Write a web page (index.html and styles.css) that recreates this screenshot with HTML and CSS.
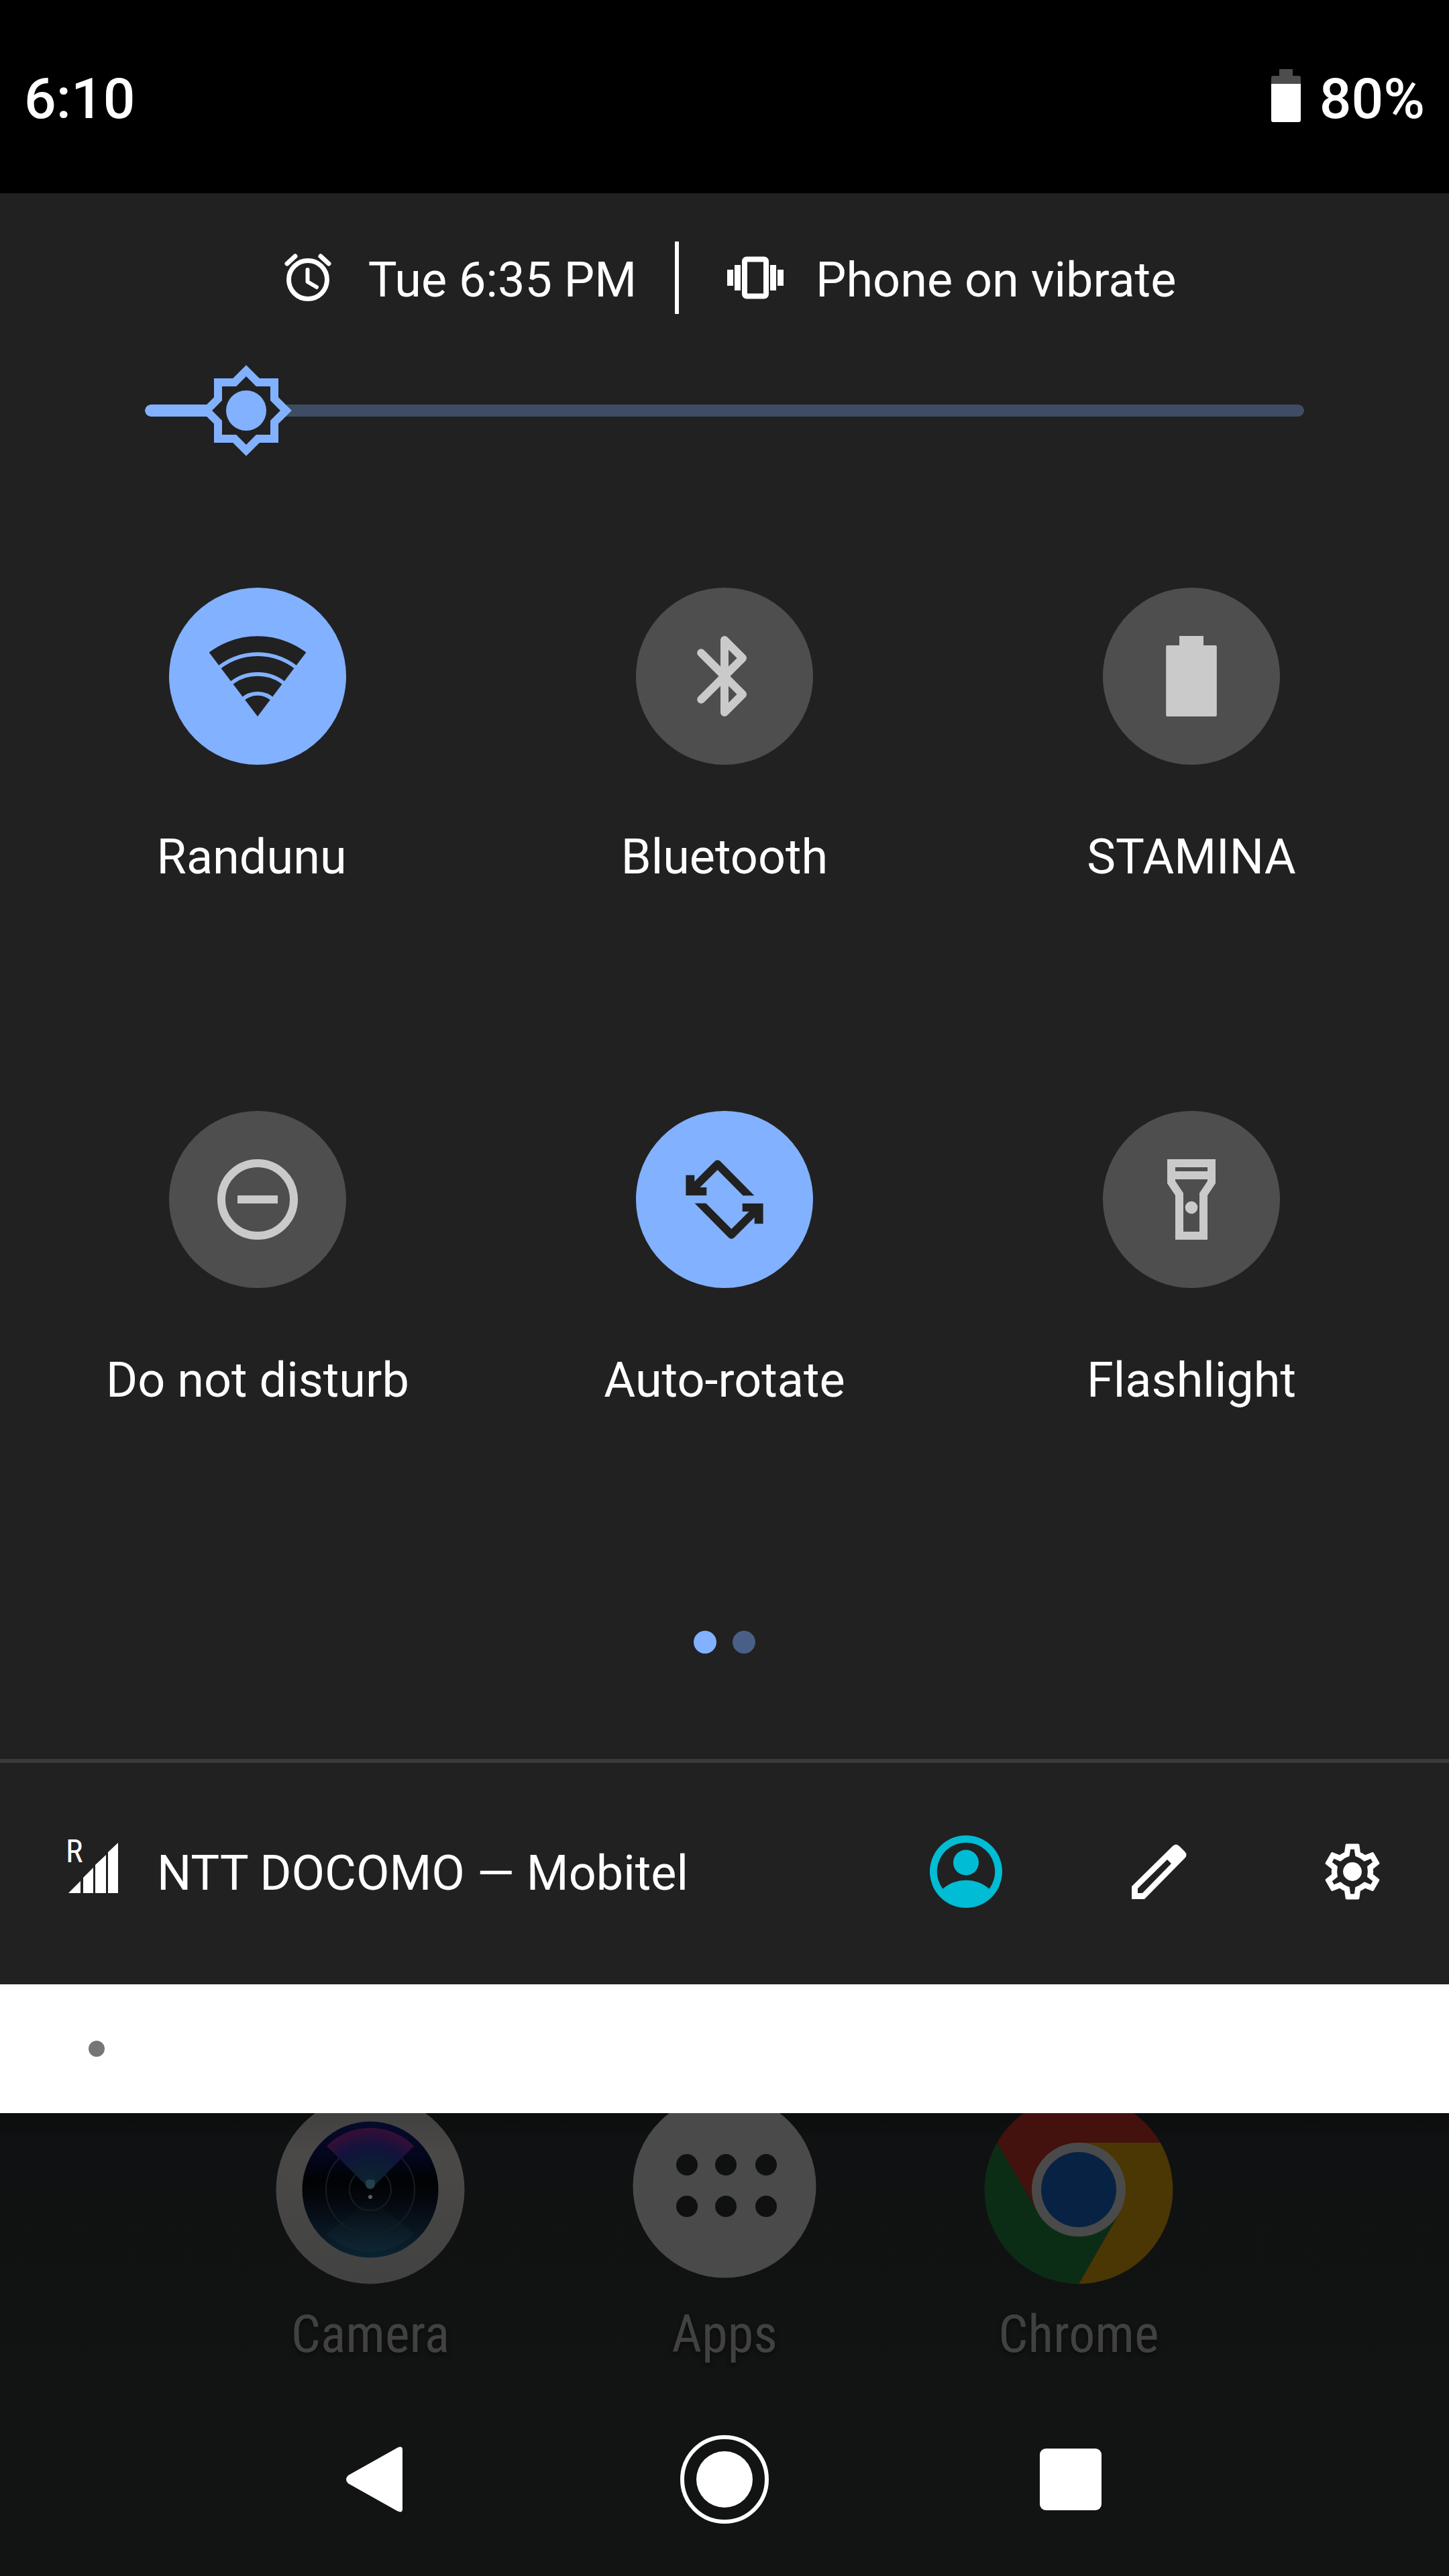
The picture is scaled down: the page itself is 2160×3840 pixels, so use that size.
FILE: index.html
```html
<!DOCTYPE html>
<html lang="en">
<head>
<meta charset="utf-8">
<meta name="viewport" content="width=device-width, initial-scale=1">
<title>Quick settings</title>
<link rel="stylesheet" href="styles.css">
</head>
<body>
<header class="status-bar">
  <time class="clock">6:10</time>
  <div class="battery">
    <svg class="battery-icon" viewBox="0 0 44 80" aria-hidden="true">
      <path fill="#4d4d4d" d="M12 0H32V10H41Q44 10 44 13V24H0V13Q0 10 3 10H12Z"/>
      <path fill="#fff" d="M0 22H44V76Q44 79 41 79H3Q0 79 0 76Z"/>
    </svg>
    <span>80%</span>
  </div>
</header>

<main class="panel">
  <div class="alerts">
    <div class="alert">
      <svg class="alert-icon" viewBox="0 0 96 96" fill="none" stroke="#fff" stroke-width="7" stroke-linecap="round" stroke-linejoin="round" aria-hidden="true">
        <circle cx="48" cy="51" r="28.500"/>
        <path d="M17 27L29 16M67 16L79 27"/>
        <path stroke-width="6" d="M47.500 36V54L61 62"/>
      </svg>
      <span>Tue 6:35 PM</span>
    </div>
    <div class="alert">
      <svg class="alert-icon" viewBox="0 0 96 96" aria-hidden="true">
        <rect x="32" y="20.500" width="32" height="55" rx="3" fill="none" stroke="#fff" stroke-width="8"/>
        <path fill="#fff" d="M6 36h9v24H6zM17 29h9v38h-9zM70 29h9v38h-9zM81 36h9v24h-9z"/>
      </svg>
      <span>Phone on vibrate</span>
    </div>
  </div>

  <div class="brightness">
    <input class="brightness-slider" type="range" min="0" max="100" value="5" aria-label="Display brightness">
  </div>

  <div class="tiles">
    <button class="tile tile-on" type="button" aria-pressed="true">
      <span class="tile-disc">
        <svg class="tile-icon" viewBox="0 0 24 24" aria-hidden="true">
          <clipPath id="fan"><path d="M12 22L-3 2.200V-2H27V2.200Z"/></clipPath>
          <g clip-path="url(#fan)" fill="none" stroke="currentColor">
            <circle cx="12" cy="22" r="17.950" stroke-width="4"/>
            <circle cx="12" cy="22" r="13" stroke-width="4"/>
            <circle cx="12" cy="22" r="8.100" stroke-width="3.900"/>
            <circle cx="12" cy="22" r="5.200" fill="currentColor" stroke="none"/>
          </g>
        </svg>
      </span>
      <span class="tile-label">Randunu&nbsp;</span>
    </button>
    <button class="tile" type="button" aria-pressed="false">
      <span class="tile-disc">
        <svg class="tile-icon" viewBox="0 0 24 24" fill="none" stroke="currentColor" stroke-width="2" stroke-linecap="round" stroke-linejoin="round" aria-hidden="true">
          <path d="M6.200 6.200L16.500 16.500 12 21V3L16.500 7.500 6.200 17.800"/>
        </svg>
      </span>
      <span class="tile-label">Bluetooth</span>
    </button>
    <button class="tile" type="button" aria-pressed="false">
      <span class="tile-disc">
        <svg class="tile-icon" viewBox="0 0 24 24" fill="currentColor" aria-hidden="true">
          <path d="M9 2h6v2.350h3q.3 0 .3.300v17q0 .350-.3.350H6q-.3 0-.3-.350v-17q0-.300.3-.300h3z"/>
        </svg>
      </span>
      <span class="tile-label">STAMINA</span>
    </button>
    <button class="tile" type="button" aria-pressed="false">
      <span class="tile-disc">
        <svg class="tile-icon" viewBox="0 0 24 24" fill="none" stroke="currentColor" stroke-width="2" aria-hidden="true">
          <circle cx="12" cy="12" r="9"/>
          <path d="M7 12H17"/>
        </svg>
      </span>
      <span class="tile-label">Do not disturb</span>
    </button>
    <button class="tile tile-on" type="button" aria-pressed="true">
      <span class="tile-disc">
        <svg class="tile-icon" viewBox="0 0 24 24" fill="currentColor" aria-hidden="true">
          <path id="turn" d="M2.400 5.950H4.550V7.550L9.600 2.500Q10.270 1.900 10.950 2.500L19.400 11.050H16.600L10.270 4.650 5.900 9H7.550V11H2.400Z"/>
          <use href="#turn" transform="rotate(180 12 12)"/>
        </svg>
      </span>
      <span class="tile-label">Auto-rotate</span>
    </button>
    <button class="tile" type="button" aria-pressed="false">
      <span class="tile-disc">
        <svg class="tile-icon" viewBox="0 0 24 24" fill="currentColor" fill-rule="evenodd" aria-hidden="true">
          <path d="M6 2H18V8L16 11V22H8V11L6 8ZM8 4V5H16V4ZM8 7V7.400L10 10.400V20H14V10.400L16 7.400V7Z"/>
          <circle cx="12" cy="14" r="1.550"/>
        </svg>
      </span>
      <span class="tile-label">Flashlight</span>
    </button>
  </div>

  <div class="pages" aria-label="Page 1 of 2">
    <span class="page page-current"></span>
    <span class="page"></span>
  </div>
</main>

<footer class="footer">
  <div class="carrier">
    <span class="signal">
      <svg class="signal-icon" viewBox="0 0 84 84" fill="#fff" aria-hidden="true">
        <path d="M8 80L26 62V80ZM30 57L45 42V80H30ZM48 38L64 23V80H48ZM67 19L82 5V80H67Z"/>
      </svg>
      <span class="roaming">R</span>
    </span>
    <span>NTT DOCOMO — Mobitel</span>
  </div>
  <div class="actions">
    <button class="action" type="button" aria-label="User">
      <svg class="action-icon" viewBox="-54 -54 108 108" fill="#00bcd4" fill-rule="evenodd" aria-hidden="true">
        <path d="M0-54A54 54 0 1 1 0 54A54 54 0 1 1 0-54ZM-34.600 25.700A43.200 43.200 0 1 1 34.600 25.700A52.500 52.500 0 0 0-34.600 25.700Z"/>
        <circle cy="-13.500" r="19"/>
      </svg>
    </button>
    <button class="action" type="button" aria-label="Edit">
      <svg class="action-icon" viewBox="-54 -54 108 108" aria-hidden="true">
        <path fill="#fff" fill-rule="evenodd" d="M-41 41V22L20-38Q25-43 30-38L38-30Q43-25 38-20L-22 41ZM-32 32H-25L18-12 12-18-32 25Z"/>
      </svg>
    </button>
    <button class="action" type="button" aria-label="Settings">
      <svg class="action-icon" viewBox="-1 -1 26 26" fill="#fff" aria-hidden="true">
        <path d="M19.430 12.980c.04-.32.07-.64.07-.98 0-.34-.03-.66-.07-.98l2.110-1.650c.19-.15.24-.42.12-.64l-2-3.460c-.09-.16-.26-.25-.44-.25-.06 0-.12.01-.17.03l-2.490 1c-.52-.4-1.080-.73-1.690-.98l-.38-2.650C14.460 2.180 14.250 2 14 2h-4c-.25 0-.46.18-.49.42l-.38 2.650c-.61.25-1.170.59-1.690.98l-2.490-1c-.06-.02-.12-.03-.18-.03-.17 0-.34.09-.43.25l-2 3.460c-.13.22-.07.49.12.64l2.110 1.650c-.04.32-.07.65-.07.98 0 .33.03.66.07.98l-2.110 1.650c-.19.15-.24.42-.12.64l2 3.460c.09.16.26.25.44.25.06 0 .12-.01.17-.03l2.490-1c.52.4 1.080.73 1.690.98l.38 2.650c.03.24.24.42.49.42h4c.25 0 .46-.18.49-.42l.38-2.650c.61-.25 1.170-.59 1.690-.98l2.490 1c.06.02.12.03.18.03.17 0 .34-.09.43-.25l2-3.460c.12-.22.07-.49-.12-.64l-2.110-1.650zm-1.980-1.710c.04.31.05.52.05.73 0 .21-.02.43-.05.73l-.14 1.130.89.7 1.080.84-.7 1.210-1.270-.51-1.040-.42-.9.68c-.43.32-.84.56-1.250.73l-1.060.43-.16 1.130-.2 1.350h-1.400l-.19-1.350-.16-1.130-1.060-.43c-.43-.18-.83-.41-1.230-.71l-.91-.7-1.060.43-1.270.51-.7-1.210 1.080-.84.89-.7-.14-1.130c-.03-.31-.05-.54-.05-.74s.02-.43.05-.73l.14-1.130-.89-.7-1.080-.84.7-1.210 1.270.51 1.040.42.9-.68c.43-.32.84-.56 1.250-.73l1.060-.43.16-1.130.2-1.350h1.390l.19 1.350.16 1.130 1.060.43c.43.18.83.41 1.230.71l.91.7 1.060-.43 1.270-.51.7 1.210-1.070.85-.89.7.14 1.130z"/>
        <circle cx="12" cy="12" r="3.350"/>
      </svg>
    </button>
  </div>
</footer>

<div class="notifications"><span class="notification-dot"></span></div>

<nav class="dock" aria-label="Home screen dock">
  <a class="app" href="#camera">
    <svg class="app-icon" viewBox="-141 -141 282 282" aria-hidden="true">
      <defs>
        <linearGradient id="rim" x1="0" y1="0" x2="0" y2="1"><stop offset="0" stop-color="#3d3d3d"/><stop offset=".3" stop-color="#4a4947"/><stop offset="1" stop-color="#424242"/></linearGradient>
        <linearGradient id="lens" x1="0" y1="0" x2="0" y2="1"><stop offset="0" stop-color="#060a2c"/><stop offset=".25" stop-color="#03061c"/><stop offset=".45" stop-color="#010203"/><stop offset=".65" stop-color="#060c14"/><stop offset="1" stop-color="#0b2331"/></linearGradient>
        <radialGradient id="beam" gradientUnits="userSpaceOnUse" cx="0" cy="0" r="92"><stop offset="0" stop-color="#0c2630"/><stop offset=".4" stop-color="#0d1d33"/><stop offset=".7" stop-color="#11133d"/><stop offset="1" stop-color="#360e36"/></radialGradient>
        <linearGradient id="glow" x1="0" y1="0" x2="0" y2="1"><stop offset="0" stop-color="#16303b" stop-opacity="0"/><stop offset="1" stop-color="#16303b" stop-opacity=".35"/></linearGradient>
      </defs>
      <circle r="140.500" fill="url(#rim)"/>
      <circle r="101.500" fill="url(#lens)"/>
      <path fill="url(#glow)" d="M0 12L-65 66A92 92 0 0 0 65 66Z"/>
      <g fill="none" stroke="#161d22" stroke-width="2"><circle r="66"/><circle r="31"/></g>
      <path fill="url(#beam)" d="M0 0L-65-65A92 92 0 0 1 65-65Z"/>
      <path fill="#24404c" d="M0-1Q-14-15 0-15Q14-15 0-1Z"/>
      <circle cy="-8" r="7" fill="#24404c"/>
      <circle cy="11" r="3" fill="#5a5f61"/>
    </svg>
    <span>Camera</span>
  </a>
  <a class="app" href="#apps">
    <svg class="app-icon" viewBox="-141 -141 282 282" aria-hidden="true">
      <circle cy="-5" r="136.500" fill="#4a4a4a"/>
      <g fill="#0e1110">
        <circle cx="-56" cy="-37" r="16"/><circle cx="2" cy="-37" r="16"/><circle cx="62" cy="-37" r="16"/>
        <circle cx="-56" cy="25" r="16"/><circle cx="2" cy="25" r="16"/><circle cx="62" cy="25" r="16"/>
      </g>
    </svg>
    <span>Apps</span>
  </a>
  <a class="app" href="#chrome">
    <svg class="app-icon" viewBox="-141 -141 282 282" aria-hidden="true">
      <path fill="#43110e" d="M-121.700-70A140.400 140.400 0 0 1 121.700-70H0L-60.600 35Z"/>
      <path fill="#4a3704" d="M121.700-70A140.400 140.400 0 0 1 0 140.400L60.600 35 0-70Z"/>
      <path fill="#0c2d15" d="M0 140.400A140.400 140.400 0 0 1-121.700-70L-60.600 35H60.600Z"/>
      <circle r="70" fill="#4a4a4a"/>
      <circle r="56" fill="#082244"/>
    </svg>
    <span>Chrome</span>
  </a>
</nav>

<nav class="navigation" aria-label="System navigation">
  <button class="nav-key" type="button" aria-label="Back">
    <svg class="nav-icon" viewBox="-72 -72 144 144" aria-hidden="true"><path fill="#fff" d="M-45-6L28-47Q36-51 36-44V44Q36 51 28 47L-45 6Q-51 0-45-6Z"/></svg>
  </button>
  <button class="nav-key" type="button" aria-label="Home">
    <svg class="nav-icon" viewBox="-72 -72 144 144" aria-hidden="true"><circle r="63" fill="none" stroke="#fff" stroke-width="6"/><circle r="42" fill="#fff"/></svg>
  </button>
  <button class="nav-key" type="button" aria-label="Overview">
    <svg class="nav-icon" viewBox="-72 -72 144 144" aria-hidden="true"><rect x="-46" y="-46" width="92" height="92" rx="9" fill="#fff"/></svg>
  </button>
</nav>
</body>
</html>
```
FILE: styles.css
```css
* {
  box-sizing: border-box;
}

body {
  margin: 0;
  background: #111413;
  color: #fff;
  font-family: Roboto, "Liberation Sans", sans-serif;
  font-size: 72px;
  line-height: 84px;
}

button {
  padding: 0;
  border: 0;
  background: none;
  color: inherit;
  font: inherit;
}

svg {
  display: block;
}

.status-bar {
  display: flex;
  align-items: center;
  justify-content: space-between;
  height: 288px;
  padding: 8px 36px 0;
  background: #000;
  font-size: 84px;
  font-weight: 500;
}

.battery {
  display: flex;
  align-items: center;
  gap: 28px;
}

.battery-icon {
  width: 44px;
  height: 80px;
  margin-bottom: 10px;
}

.panel {
  padding: 72px 36px 157px;
  background: #212121;
}

.alerts {
  display: flex;
  justify-content: center;
  height: 108px;
  padding-left: 4px;
}

.alert {
  display: flex;
  align-items: center;
  gap: 42px;
}

.alert span {
  padding-top: 8px;
}

.alert + .alert {
  margin-left: 57px;
  padding-left: 66px;
  border-left: 6px solid #fff;
}

.alert-icon {
  width: 96px;
  height: 96px;
}

.brightness {
  display: flex;
  margin: 72px 180px 192px;
}

.brightness-slider {
  width: 100%;
  height: 144px;
  margin: 0;
  appearance: none;
  background:
    radial-gradient(circle closest-side, #82b1ff 94%, transparent) left center / 18px 18px no-repeat,
    radial-gradient(circle closest-side, #3f4d64 94%, transparent) right center / 18px 18px no-repeat,
    linear-gradient(to right, transparent 9px, #82b1ff 9px 8%, #3f4d64 8% calc(100% - 9px), transparent calc(100% - 9px)) center / 100% 18px no-repeat;
}

.brightness-slider::-webkit-slider-runnable-track {
  height: 144px;
}

.brightness-slider::-webkit-slider-thumb {
  width: 144px;
  height: 144px;
  appearance: none;
  background: url("data:image/svg+xml,%3Csvg xmlns='http://www.w3.org/2000/svg' viewBox='0 0 24 24'%3E%3Cpath fill='%2382b1ff' d='M20 8.690V4h-4.690L12 .690 8.690 4H4v4.690L.690 12 4 15.310V20h4.690L12 23.310 15.310 20H20v-4.690L23.310 12z'/%3E%3Cpath fill='%23212121' d='M18 14.480V18h-3.520L12 20.480 9.520 18H6v-3.520L3.520 12 6 9.520V6h3.520L12 3.520 14.480 6H18v3.520L20.480 12z'/%3E%3Ccircle fill='%2382b1ff' cx='12' cy='12' r='5'/%3E%3C/svg%3E") center / contain no-repeat;
}

.tiles {
  display: grid;
  grid-template-columns: repeat(3, 1fr);
  row-gap: 336px;
}

.tile {
  display: flex;
  flex-direction: column;
  align-items: center;
  gap: 96px;
}

.tile-disc {
  display: grid;
  place-items: center;
  width: 264px;
  height: 264px;
  border-radius: 50%;
  background: #4e4e4e;
  color: #cacaca;
}

.tile-on .tile-disc {
  background: #82b1ff;
  color: #212121;
}

.tile-icon {
  width: 144px;
  height: 144px;
}

.pages {
  display: flex;
  justify-content: center;
  gap: 24px;
  margin-top: 331px;
}

.page {
  width: 34px;
  height: 34px;
  border-radius: 50%;
  background: #4a5f86;
}

.page-current {
  background: #82b1ff;
}

.footer {
  display: flex;
  justify-content: space-between;
  height: 336px;
  border-top: 6px solid #3b3b3b;
  background: #212121;
}

.carrier {
  display: flex;
  align-items: center;
  gap: 56px;
  padding-left: 94px;
}

.signal {
  position: relative;
  margin-bottom: 18px;
}

.signal-icon {
  width: 84px;
  height: 84px;
}

.roaming {
  position: absolute;
  top: -6px;
  left: 4px;
  font-family: "Roboto Condensed", Roboto, "Liberation Sans", sans-serif;
  font-size: 48px;
  line-height: 48px;
}

.actions {
  display: flex;
}

.action {
  display: grid;
  place-items: center;
  width: 288px;
  height: 324px;
}

.action-icon {
  width: 108px;
  height: 108px;
}

.notifications {
  display: flex;
  align-items: center;
  height: 192px;
  padding-left: 132px;
  background: #fff;
}

.notification-dot {
  width: 24px;
  height: 24px;
  border-radius: 50%;
  background: #757678;
}

.dock {
  display: grid;
  grid-template-columns: repeat(3, 1fr);
  height: 402px;
  padding: 0 288px;
  overflow: hidden;
  background: linear-gradient(#0c0e0d, #0f1112 40px, #121413);
}

.app {
  display: flex;
  flex-direction: column;
  align-items: center;
  gap: 33px;
  margin-top: -27px;
  color: #414141;
  font-family: "Roboto Condensed", Roboto, "Liberation Sans", sans-serif;
  font-size: 78px;
  text-decoration: none;
  text-shadow: 0 3px 6px #0a0b0b;
}

.app-icon {
  flex: none;
  width: 282px;
  height: 282px;
}

.navigation {
  display: grid;
  grid-template-columns: repeat(3, 1fr);
  height: 288px;
  padding: 0 306px;
}

.nav-key {
  display: grid;
  place-items: center;
}

.nav-icon {
  width: 144px;
  height: 144px;
}
```
